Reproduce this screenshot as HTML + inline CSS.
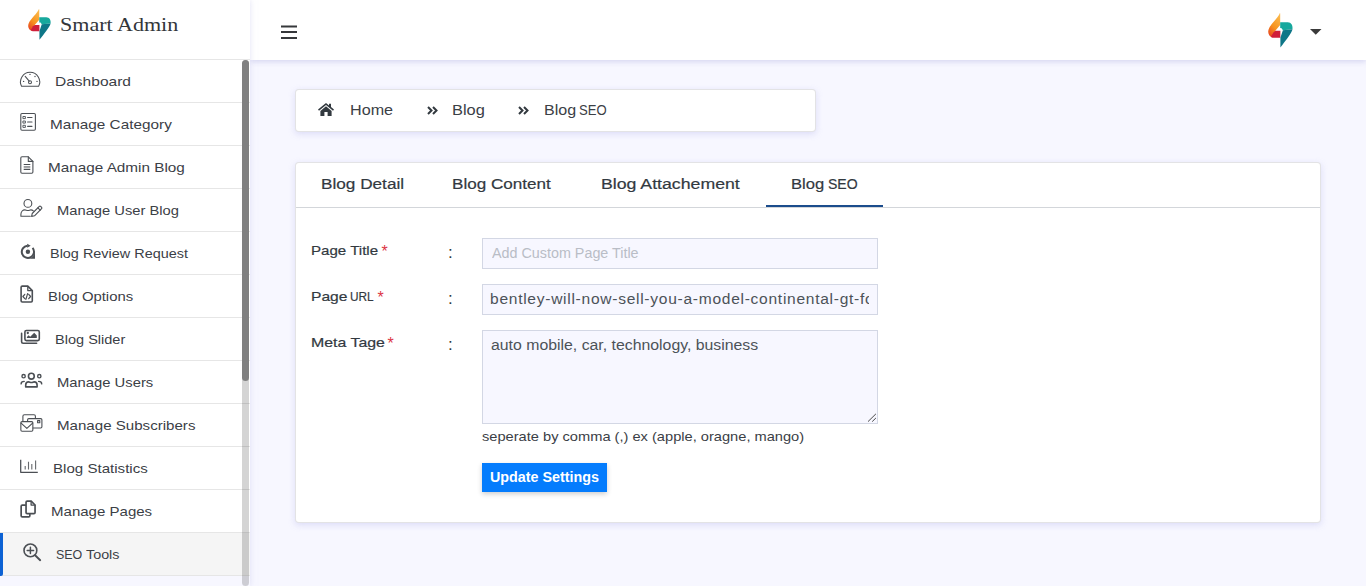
<!DOCTYPE html>
<html>
<head>
<meta charset="utf-8">
<title>Smart Admin</title>
<style>
*{box-sizing:border-box;margin:0;padding:0}
html,body{width:1366px;height:586px;overflow:hidden}
body{font-family:"Liberation Sans",sans-serif;background:#f7f7ff;color:#32393f;font-size:14px;position:relative}
.abs{position:absolute}
.t{position:absolute;line-height:30px;white-space:nowrap;transform-origin:0 0}
svg{position:absolute;overflow:visible}
#topbar{position:absolute;left:250px;top:0;width:1116px;height:60px;background:#fff;box-shadow:0 2px 5px 0 rgba(206,206,238,.75);z-index:2}
#sidebar{position:absolute;left:0;top:0;width:250px;height:586px;background:#fff;box-shadow:0 0 6px 0 rgba(206,206,238,.6);z-index:3}
#brand{position:absolute;left:0;top:0;width:250px;height:60px;border-bottom:1px solid #e6e6e6}
.mi{position:absolute;left:0;width:250px;height:43px;border-bottom:1px solid #e6e6e6}
.mi.act{background:#f5f5f5}
.mi.act:before{content:"";position:absolute;left:0;top:0;width:3px;height:43px;background:#0d62d4;border-radius:0 0 2px 0}
.mi.next{background:#f7f7ff;border:0}
#track{position:absolute;left:242px;top:60px;width:7px;height:526px;background:rgba(0,0,0,.17);border-radius:4px}
#thumb{position:absolute;left:242px;top:60px;width:7px;height:321px;background:#808080;border-radius:4px}
.card{position:absolute;background:#fff;border-radius:4px;border:1px solid rgba(0,0,20,.11);box-shadow:0 2px 6px 0 rgba(212,212,245,.8)}
.inp{position:absolute;left:186px;width:396px;background:#f7f7ff;border:1px solid #d3d7e4;overflow:hidden}
</style>
</head>
<body>
<div id="sidebar">
  <div id="brand">
    <svg style="left:28px;top:8.7px" width="22.8" height="30.8" viewBox="0 0 24.7 34.5" preserveAspectRatio="none"><defs><linearGradient id="lga" x1="0.7" y1="0" x2="0.2" y2="1"><stop offset="0" stop-color="#fbb84a"/><stop offset=".55" stop-color="#f7931e"/><stop offset="1" stop-color="#e8431f"/></linearGradient></defs><path d="M11.9 0 C10.5 4.5 2.5 11 0.6 16.5 C-0.6 20.3 1.2 23.6 4.4 24.6 L7.3 17.8 L12.2 12 L12.2 0.5 Z" fill="url(#lga)"/><path d="M5.4 19.4 L7.3 17.8 L12.4 17.8 L12.4 24.8 L5 24.8 Q3.6 24.6 3 23.4 Z" fill="#cf1f3b"/><path d="M12.2 9.3 L19.8 9.3 C23.2 9.3 25 12.4 24.5 16.2 L14.9 17.2 L13.6 15.2 L12.2 15 Z" fill="#17a89d"/><path d="M14.9 17.2 L24.5 16.2 C24 19.5 17 28.5 12.4 34.5 L12.4 24.8 Z" fill="#0e7687"/></svg>
    <span class="t" id="brandtxt" style="left:59.5px;top:10px;font-family:'Liberation Serif',serif;font-size:19px;color:#33363a;transform:scaleX(1.161)">Smart Admin</span>
  </div>
  <div class="mi" style="top:60px"><svg style="left:0;top:0" width="50" height="43" viewBox="0 0 50 43" fill="none" stroke="#4b4f54" stroke-width="1.05" stroke-linecap="round" stroke-linejoin="round"><path d="M21.57 26.3 A9.6 9.6 0 1 1 38.63 26.3 Z"/><path d="M25.2 16.3 L29.2 21.1"/><circle cx="30" cy="22.3" r="1.5"/><g fill="#4b4f54" stroke="none"><circle cx="23.6" cy="21.4" r=".7"/><circle cx="30" cy="14.4" r=".7"/><circle cx="35" cy="16.5" r=".7"/><circle cx="37" cy="21.4" r=".7"/></g></svg><span class="t" style="left:54.6px;top:7px;font-size:13.5px;color:#3b4046;transform:scaleX(1.15);">Dashboard</span></div>
  <div class="mi" style="top:103px"><svg style="left:0;top:0" width="50" height="43" viewBox="0 0 50 43" fill="none" stroke="#4b4f54" stroke-width="1.1" stroke-linecap="round" stroke-linejoin="round"><rect x="20.8" y="10.5" width="14.6" height="16.8" rx="1.2"/><g stroke-width=".9"><rect x="23.3" y="13.5" width="2.1" height="2.1"/><rect x="23.3" y="18" width="2.1" height="2.1"/><rect x="23.3" y="22.3" width="2.1" height="2.1"/></g><path d="M27.6 14.55 H32 M27.6 19.05 H32 M27.6 23.35 H32"/></svg><span class="t" style="left:50.3px;top:7px;font-size:13.5px;color:#3b4046;transform:scaleX(1.1349);">Manage Category</span></div>
  <div class="mi" style="top:146px"><svg style="left:0;top:0" width="50" height="43" viewBox="0 0 50 43" fill="none" stroke="#4b4f54" stroke-width="1.1" stroke-linecap="round" stroke-linejoin="round"><path d="M22 10.8 H28.3 L32.9 15.4 V26.1 Q32.9 27.3 31.7 27.3 H22 Q20.8 27.3 20.8 26.1 V12 Q20.8 10.8 22 10.8 Z"/><path d="M28.3 10.8 V15.4 H32.9"/><path d="M23.7 18.5 H30.3 M23.7 23.4 H30.3" stroke-linecap="butt"/><path d="M23.7 20.95 H30.3" stroke-width="1.5" stroke-linecap="butt" opacity=".7"/></svg><span class="t" style="left:48.3px;top:7px;font-size:13.5px;color:#3b4046;transform:scaleX(1.1328);">Manage Admin Blog</span></div>
  <div class="mi" style="top:189px"><svg style="left:0;top:0" width="50" height="43" viewBox="0 0 50 43" fill="none" stroke="#4b4f54" stroke-width="1.1" stroke-linecap="round" stroke-linejoin="round"><circle cx="27.9" cy="14.4" r="3.9"/><path d="M30.3 27.3 H20.9 V25.6 C20.9 22.6 22.9 20.9 24.9 20.9 C26 20.9 26.6 21.5 27.9 21.5 C29.2 21.5 29.8 20.9 30.9 20.9 C31.9 20.9 32.7 21.3 33.3 21.9"/><path d="M31.6 27.4 L32.2 24.5 L39.3 17.4 Q40 16.7 40.7 17.4 L41.6 18.3 Q42.3 19 41.6 19.7 L34.5 26.8 Z"/><path d="M37.9 18.8 L40.2 21.1"/></svg><span class="t" style="left:57.2px;top:7px;font-size:13.5px;color:#3b4046;transform:scaleX(1.0909);">Manage User Blog</span></div>
  <div class="mi" style="top:232px"><svg style="left:0;top:0" width="50" height="43" viewBox="0 0 50 43" fill="none" stroke="#4b4f54" stroke-width="1" stroke-linecap="round" stroke-linejoin="round"><path d="M32.57 15.88 A6.1 6.1 0 1 1 27.4 13.72" stroke-width="2" stroke-linecap="butt"/><g fill="#4b4f54" stroke="none"><path d="M27.2 11.7 L30.7 13.7 L27.2 15.7 Z"/><circle cx="27.9" cy="19.8" r="2.2"/><path d="M35 19.8 V26.8 H27.9 A6.5 6.5 0 0 0 34.4 19.8 Z"/></g></svg><span class="t" style="left:50.3px;top:7px;font-size:13.5px;color:#3b4046;transform:scaleX(1.0695);">Blog Review Request</span></div>
  <div class="mi" style="top:275px"><svg style="left:0;top:0" width="50" height="43" viewBox="0 0 50 43" fill="none" stroke="#4b4f54" stroke-width="1.6" stroke-linecap="round" stroke-linejoin="round"><path d="M22.3 11.1 H27.8 L32.3 15.6 V25.8 Q32.3 27 31.1 27 H22.3 Q21.1 27 21.1 25.8 V12.3 Q21.1 11.1 22.3 11.1 Z"/><path d="M27.8 11.3 V15.6 H32.1" stroke-width="1.3"/><path d="M24.8 19.3 L22.9 21.5 L24.8 23.7 M27.6 18.6 L25.9 24.4 M28.7 19.3 L30.6 21.5 L28.7 23.7" stroke-width="1.2"/></svg><span class="t" style="left:48.4px;top:7px;font-size:13.5px;color:#3b4046;transform:scaleX(1.1013);">Blog Options</span></div>
  <div class="mi" style="top:318px"><svg style="left:0;top:0" width="50" height="43" viewBox="0 0 50 43" fill="none" stroke="#4b4f54" stroke-width="1.6" stroke-linecap="round" stroke-linejoin="round"><rect x="24.9" y="12.5" width="14.4" height="10.1" rx="1.5"/><path d="M21.6 15.4 V23.8 Q21.6 25.3 23.1 25.3 H36.6"/><g fill="#4b4f54" stroke="none"><circle cx="27.8" cy="15" r="1.15"/><path d="M26.9 19.9 V18.9 L28.6 17.2 L30.2 18.8 L34.2 14.8 L36.8 17.4 V19.9 Z"/></g></svg><span class="t" style="left:54.7px;top:7px;font-size:13.5px;color:#3b4046;transform:scaleX(1.0766);">Blog Slider</span></div>
  <div class="mi" style="top:361px"><svg style="left:0;top:0" width="50" height="43" viewBox="0 0 50 43" fill="none" stroke="#4b4f54" stroke-width="1.6" stroke-linecap="round" stroke-linejoin="round"><circle cx="31.35" cy="15.2" r="2.9"/><path d="M25.7 25.9 V24 C25.7 22 27.2 20.9 28.7 20.9 C29.7 20.9 30.1 21.5 31.4 21.5 C32.7 21.5 33.1 20.9 34.1 20.9 C35.6 20.9 37.1 22 37.1 24 V25.9 Z"/><g stroke-width="1.4"><circle cx="23.6" cy="15.2" r="1.65"/><circle cx="39.3" cy="15.2" r="1.65"/><path d="M21.1 22.9 C21.1 21.2 22 20.4 24.2 20.4 M41.7 22.9 C41.7 21.2 40.8 20.4 38.6 20.4"/></g></svg><span class="t" style="left:57.2px;top:7px;font-size:13.5px;color:#3b4046;transform:scaleX(1.0965);">Manage Users</span></div>
  <div class="mi" style="top:404px"><svg style="left:0;top:0" width="50" height="43" viewBox="0 0 50 43" fill="none" stroke="#4b4f54" stroke-width="1.1" stroke-linecap="round" stroke-linejoin="round"><rect x="20.85" y="17.65" width="12" height="9.6" rx="1.2"/><path d="M21.1 19.2 L26.85 24.4 L32.6 19.2"/><path d="M22.9 17.4 V12.3 Q22.9 10.8 24.4 10.8 H34 Q35.4 10.8 35.4 12.3 V14.3"/><path d="M27.6 17.4 V15.8 Q27.6 14.6 28.8 14.6 H40.7 Q41.9 14.6 41.9 15.8 V22.8 Q41.9 24 40.7 24 H33.2"/><rect x="37.6" y="16.6" width="2.2" height="2.1"/></svg><span class="t" style="left:57.2px;top:7px;font-size:13.5px;color:#3b4046;transform:scaleX(1.118);">Manage Subscribers</span></div>
  <div class="mi" style="top:447px"><svg style="left:0;top:0" width="50" height="43" viewBox="0 0 50 43" fill="none" stroke="#4b4f54" stroke-width="1.1" stroke-linecap="round" stroke-linejoin="round"><path d="M20.7 12.7 V25.3 H37.8" stroke-width="1.25" stroke-linecap="butt"/><path d="M25.2 19 V22.5 M28.5 14.8 V22.5 M31.8 17 V22.5 M35.6 13.5 V22.5" stroke-width="1.1" stroke-linecap="butt" opacity=".85"/></svg><span class="t" style="left:52.5px;top:7px;font-size:13.5px;color:#3b4046;transform:scaleX(1.1181);">Blog Statistics</span></div>
  <div class="mi" style="top:490px"><svg style="left:0;top:0" width="50" height="43" viewBox="0 0 50 43" fill="none" stroke="#4b4f54" stroke-width="1.7" stroke-linecap="round" stroke-linejoin="round"><path d="M27.2 11.15 H31.2 L35.05 15 V22.5 Q35.05 23.65 33.9 23.65 H27.2 Q26.05 23.65 26.05 22.5 V12.3 Q26.05 11.15 27.2 11.15 Z"/><path d="M31.1 11.4 V15.1 H34.9" stroke-width="1.3"/><path d="M25.2 15.2 H22.3 Q21.15 15.2 21.15 16.3 V25.8 Q21.15 26.95 22.3 26.95 H28.7 Q29.85 26.95 29.85 25.8 V24.4"/></svg><span class="t" style="left:50.5px;top:7px;font-size:13.5px;color:#3b4046;transform:scaleX(1.1135);">Manage Pages</span></div>
  <div class="mi act" style="top:533px"><svg style="left:0;top:0" width="50" height="43" viewBox="0 0 50 43" fill="none" stroke="#4b4f54" stroke-width="1.6" stroke-linecap="round" stroke-linejoin="round"><circle cx="30.4" cy="17.4" r="6.4"/><path d="M27.2 17.4 H33.6 M30.4 14.3 V20.6" stroke-width="1.5"/><path d="M35.1 22.2 L40.2 27.2" stroke-width="1.9"/></svg><span class="t" style="left:55.6px;top:7px;font-size:13.5px;color:#3b4046;transform:scaleX(0.9222);">SEO</span><span class="t" style="left:86.3px;top:7px;font-size:13.5px;color:#3b4046;transform:scaleX(1.0613);">Tools</span></div>
  <div class="mi next" style="top:576px"></div>
  <div id="track"></div><div id="thumb"></div>
</div>

<div id="topbar">
  <svg style="left:31px;top:25px" width="16" height="14" viewBox="0 0 16 14" ><path d="M0 1.5h16M0 7.1h16M0 13h16" stroke="#36383b" stroke-width="2"/></svg>
  <svg style="left:1017.8px;top:12.7px" width="24.7" height="34.5" viewBox="0 0 24.7 34.5" preserveAspectRatio="none"><defs><linearGradient id="lgb" x1="0.7" y1="0" x2="0.2" y2="1"><stop offset="0" stop-color="#fbb84a"/><stop offset=".55" stop-color="#f7931e"/><stop offset="1" stop-color="#e8431f"/></linearGradient></defs><path d="M11.9 0 C10.5 4.5 2.5 11 0.6 16.5 C-0.6 20.3 1.2 23.6 4.4 24.6 L7.3 17.8 L12.2 12 L12.2 0.5 Z" fill="url(#lgb)"/><path d="M5.4 19.4 L7.3 17.8 L12.4 17.8 L12.4 24.8 L5 24.8 Q3.6 24.6 3 23.4 Z" fill="#cf1f3b"/><path d="M12.2 9.3 L19.8 9.3 C23.2 9.3 25 12.4 24.5 16.2 L14.9 17.2 L13.6 15.2 L12.2 15 Z" fill="#17a89d"/><path d="M14.9 17.2 L24.5 16.2 C24 19.5 17 28.5 12.4 34.5 L12.4 24.8 Z" fill="#0e7687"/></svg>
  <svg style="left:1059.6px;top:29.1px" width="11.5" height="5.8" viewBox="0 0 11.5 5.8" ><path d="M0 0h11.5L5.75 5.8z" fill="#3a3a3a"/></svg>
</div>

<div class="card" style="left:295px;top:89px;width:521px;height:43px"></div>
<div class="abs" id="bc" style="left:296px;top:90px;width:520px;height:41px">
  <svg style="left:22px;top:13px" width="16" height="13" viewBox="0 0 16 13" ><path d="M8 0 L0 6.6 L1 7.8 L8 2 L15 7.8 L16 6.6 L13 4.1 V0.8 H11 V2.5 Z M8 3.3 L2.4 7.9 V13 H6.4 V9 H9.6 V13 H13.6 V7.9 Z" fill="#32393f"/></svg>
  <span class="t" style="left:53.6px;top:5px;font-size:14px;color:#3b4046;transform:scaleX(1.1528);">Home</span>
  <svg style="left:131px;top:15.5px" width="11" height="9" viewBox="0 0 11 9" ><path d="M1 1l3.5 3.5L1 8M6 1l3.5 3.5L6 8" fill="none" stroke="#32393f" stroke-width="2"/></svg>
  <span class="t" style="left:156.3px;top:5px;font-size:14px;color:#3b4046;transform:scaleX(1.1731);">Blog</span>
  <svg style="left:222px;top:15.5px" width="11" height="9" viewBox="0 0 11 9" ><path d="M1 1l3.5 3.5L1 8M6 1l3.5 3.5L6 8" fill="none" stroke="#32393f" stroke-width="2"/></svg>
  <span class="t" style="left:247.8px;top:5px;font-size:14px;color:#3b4046;transform:scaleX(1.1462);">Blog</span><span class="t" style="left:283.3px;top:5px;font-size:14px;color:#3b4046;transform:scaleX(0.9357);">SEO</span>
</div>

<div class="card" style="left:295px;top:162px;width:1026px;height:361px"></div>
<div class="abs" id="main" style="left:296px;top:162px;width:1024px;height:360px">
  <div class="abs" style="left:0;top:45px;width:1024px;height:1px;background:#d3d6da"></div>
  <span class="t" style="left:24.5px;top:7px;font-size:15.5px;color:#32393f;-webkit-text-stroke:.2px;transform:scaleX(1.1082);">Blog Detail</span>
  <span class="t" style="left:156.4px;top:7px;font-size:15.5px;color:#32393f;-webkit-text-stroke:.2px;transform:scaleX(1.1022);">Blog Content</span>
  <span class="t" style="left:305.3px;top:7px;font-size:15.5px;color:#32393f;-webkit-text-stroke:.2px;transform:scaleX(1.1421);">Blog Attachement</span>
  <span class="t" style="left:494.5px;top:7px;font-size:15.5px;color:#32393f;-webkit-text-stroke:.2px;transform:scaleX(1.0724);">Blog</span><span class="t" style="left:532.0px;top:7px;font-size:15.5px;color:#32393f;-webkit-text-stroke:.2px;transform:scaleX(0.9065);">SEO</span>
  <div class="abs" style="left:470px;top:43px;width:117px;height:2px;background:#1b4c8c"></div>

  <span class="t" style="left:14.8px;top:74px;font-size:13.5px;color:#32393f;-webkit-text-stroke:.2px;transform:scaleX(1.1169);">Page Title</span><span class="t" style="left:85.5px;top:75px;font-size:16px;color:#dc3545">*</span><span class="t" style="left:152.1px;top:76px;font-size:17px;color:#32393f">:</span>
  <span class="t" style="left:14.7px;top:120px;font-size:13.5px;color:#32393f;-webkit-text-stroke:.2px;transform:scaleX(1.1567);">Page</span><span class="t" style="left:54.1px;top:120px;font-size:13.5px;color:#32393f;-webkit-text-stroke:.2px;transform:scaleX(0.8769);">URL</span><span class="t" style="left:81.5px;top:121px;font-size:16px;color:#dc3545">*</span><span class="t" style="left:152.1px;top:122px;font-size:17px;color:#32393f">:</span>
  <span class="t" style="left:14.7px;top:166px;font-size:13.5px;color:#32393f;-webkit-text-stroke:.2px;transform:scaleX(1.177);">Meta Tage</span><span class="t" style="left:91.4px;top:167px;font-size:16px;color:#dc3545">*</span><span class="t" style="left:152.1px;top:168px;font-size:17px;color:#32393f">:</span>

  <div class="inp" style="top:76px;height:31px"></div>
  <div class="inp" style="top:122px;height:31px"></div>
  <div class="abs" style="left:193px;top:122px;width:380px;height:31px;overflow:hidden"><span class="t" style="left:1.3px;top:0px;font-size:14px;color:#4c5258;letter-spacing:0.65px;transform:scaleX(1.1113);">bentley-will-now-sell-you-a-model-continental-gt-for-less</span></div>
  <div class="inp" style="top:168px;height:94px"></div>
  <svg style="left:572px;top:251px" width="8" height="9" viewBox="572 251 8 9" ><path d="M579.9 251.9L572 259.6M579.9 256L576.2 259.6" stroke="#4a4a4a" stroke-width="1"/></svg>
  <span class="t" style="left:195.5px;top:76px;font-size:14px;color:#b9bdc6;transform:scaleX(1.0238);">Add Custom Page Title</span>
  <span class="t" style="left:195.2px;top:168px;font-size:14px;color:#4c5258;transform:scaleX(1.1306);">auto mobile, car, technology, business</span>
  <span class="t" style="left:186.3px;top:260px;font-size:13.5px;color:#3b4046;transform:scaleX(1.0841);">seperate by comma (,) ex (apple, oragne, mango)</span>
  <div class="abs" style="left:186px;top:301px;width:125px;height:29px;background:#047cfd;box-shadow:0 2px 5px rgba(0,0,0,.2)"></div>
  <span class="t" style="left:193.9px;top:300px;font-size:14px;color:#ffffff;font-weight:700;transform:scaleX(1.0219);">Update Settings</span>
</div>
</body>
</html>
